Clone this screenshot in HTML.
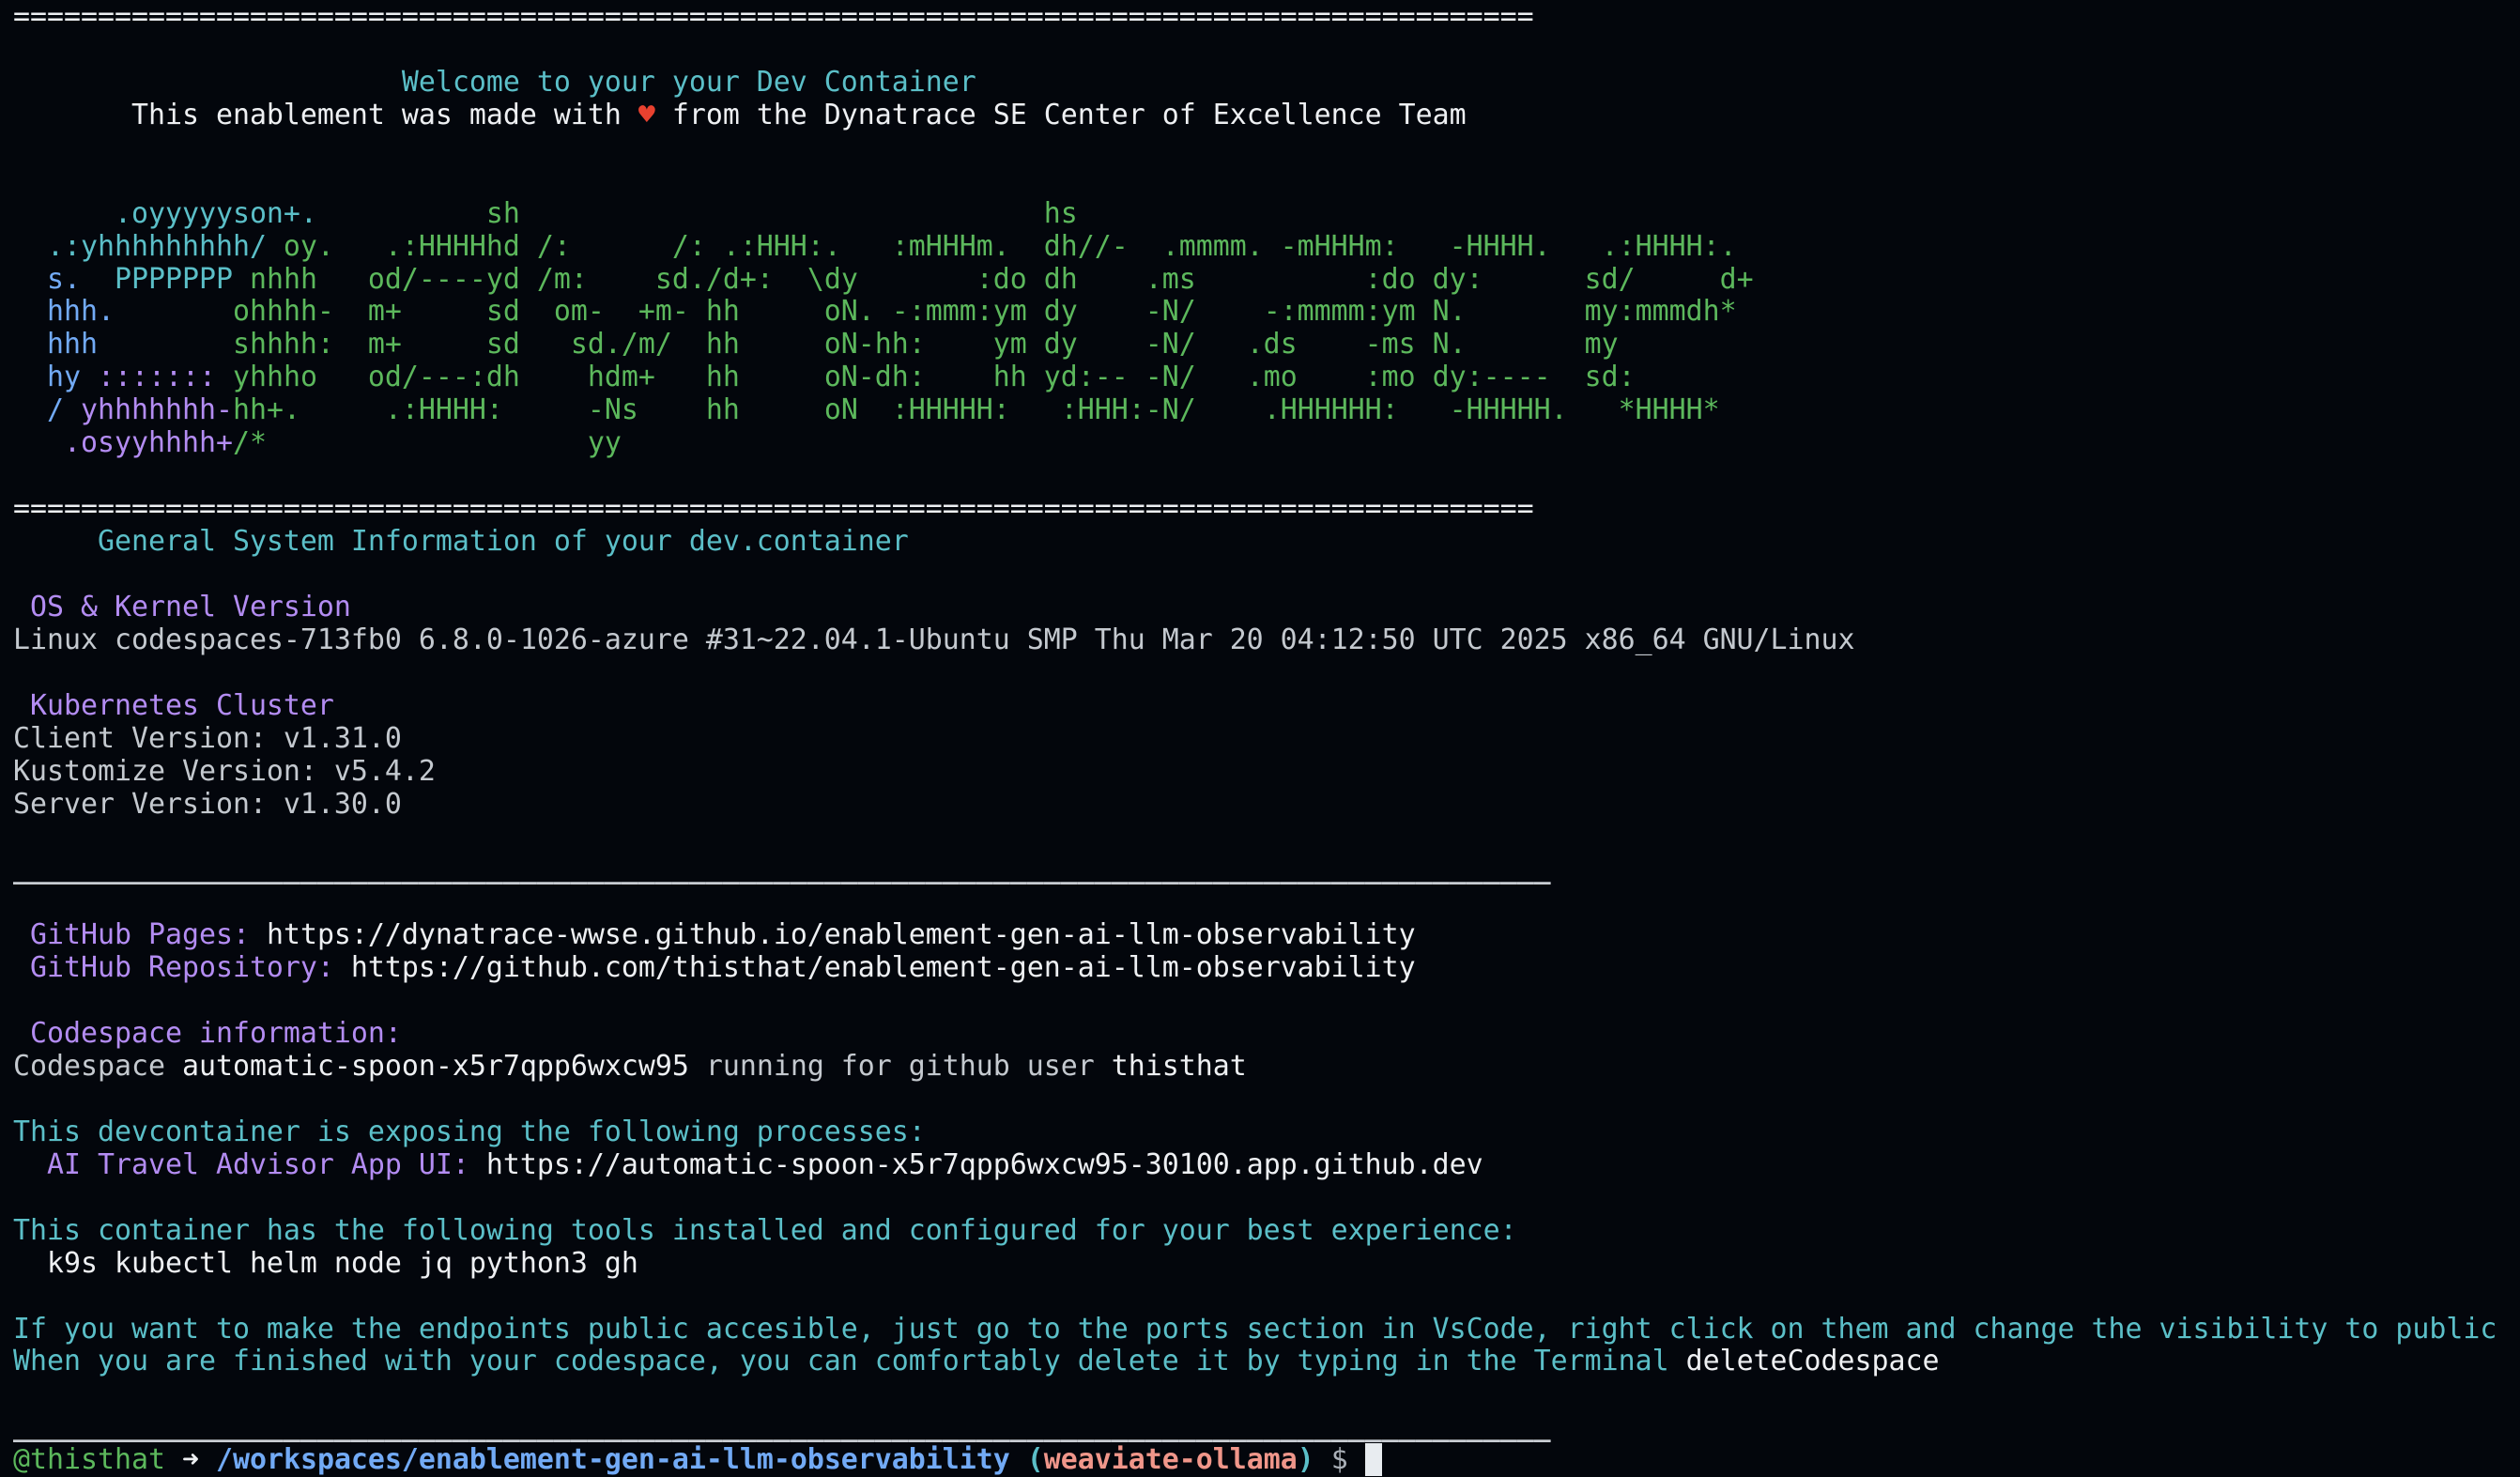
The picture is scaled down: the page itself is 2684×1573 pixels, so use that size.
<!DOCTYPE html>
<html><head><meta charset="utf-8"><style>
html,body{margin:0;padding:0;background:#03060c;width:2684px;height:1572px;overflow:hidden}
pre{margin:0;padding:0 0 0 14px;position:absolute;top:1px;left:0;font-family:"DejaVu Sans Mono","Liberation Mono",monospace;font-size:29.9px;line-height:34.93px;color:#c4c9cf;white-space:pre}
.c{color:#5bbfc8}.g{color:#5cb85c}.b{color:#72aaf5}.p{color:#b38cf2}.w{color:#eef0f3}.r{color:#e8412f}.o{color:#f0968a}.gr{color:#aab0b8}
.u{color:#c8ccd2;font-weight:bold}
</style></head><body><pre><span class="w">==========================================================================================</span>

<span class="c">                       Welcome to your your Dev Container</span>
<span class="w">       This enablement was made with <span class="r">♥</span> from the Dynatrace SE Center of Excellence Team</span>


<span class="c">      .oyyyyyson+.</span><span class="g">          sh                               hs</span>
<span class="c">  .:yhhhhhhhhh/</span><span class="g"> oy.   .:HHHHhd /:      /: .:HHH:.   :mHHHm.  dh//-  .mmmm. -mHHHm:   -HHHH.   .:HHHH:.</span>
<span class="b">  s.</span>  <span class="c">PPPPPPP</span><span class="g"> nhhh   od/----yd /m:    sd./d+:  \dy       :do dh    .ms          :do dy:      sd/     d+</span>
<span class="b">  hhh.</span><span class="g">       ohhhh-  m+     sd  om-  +m- hh     oN. -:mmm:ym dy    -N/    -:mmmm:ym N.       my:mmmdh*</span>
<span class="b">  hhh</span><span class="g">        shhhh:  m+     sd   sd./m/  hh     oN-hh:    ym dy    -N/   .ds    -ms N.       my</span>
<span class="b">  hy</span> <span class="p">:::::::</span><span class="g"> yhhho   od/---:dh    hdm+   hh     oN-dh:    hh yd:-- -N/   .mo    :mo dy:----  sd:</span>
<span class="b">  /</span> <span class="p">yhhhhhhh-</span><span class="g">hh+.     .:HHHH:     -Ns    hh     oN  :HHHHH:   :HHH:-N/    .HHHHHH:   -HHHHH.   *HHHH*</span>
<span class="p">   .osyyhhhh+</span><span class="g">/*                   yy</span>

<span class="w">==========================================================================================</span>
<span class="c">     General System Information of your dev.container</span>

<span class="p"> OS &amp; Kernel Version</span>
Linux codespaces-713fb0 6.8.0-1026-azure #31~22.04.1-Ubuntu SMP Thu Mar 20 04:12:50 UTC 2025 x86_64 GNU/Linux

<span class="p"> Kubernetes Cluster</span>
Client Version: v1.31.0
Kustomize Version: v5.4.2
Server Version: v1.30.0

<span class="u">___________________________________________________________________________________________</span>

<span class="p"> GitHub Pages:</span> <span class="w">https://dynatrace-wwse.github.io/enablement-gen-ai-llm-observability</span>
<span class="p"> GitHub Repository:</span> <span class="w">https://github.com/thisthat/enablement-gen-ai-llm-observability</span>

<span class="p"> Codespace information:</span>
Codespace <span class="w">automatic-spoon-x5r7qpp6wxcw95</span> running for github user <span class="w">thisthat</span>

<span class="c">This devcontainer is exposing the following processes:</span>
<span class="p">  AI Travel Advisor App UI:</span> <span class="w">https://automatic-spoon-x5r7qpp6wxcw95-30100.app.github.dev</span>

<span class="c">This container has the following tools installed and configured for your best experience:</span>
<span class="w">  k9s kubectl helm node jq python3 gh</span>

<span class="c">If you want to make the endpoints public accesible, just go to the ports section in VsCode, right click on them and change the visibility to public</span>
<span class="c">When you are finished with your codespace, you can comfortably delete it by typing in the Terminal</span> <span class="w">deleteCodespace</span>

<span class="u">___________________________________________________________________________________________</span>
<span class="g">@thisthat</span> <span class="w">➜</span> <b class="b">/workspaces/enablement-gen-ai-llm-observability</b> <b class="c">(</b><b class="o">weaviate-ollama</b><b class="c">)</b> <span class="gr">$</span> <span style="background:#e8ecf0"> </span></pre></body></html>
